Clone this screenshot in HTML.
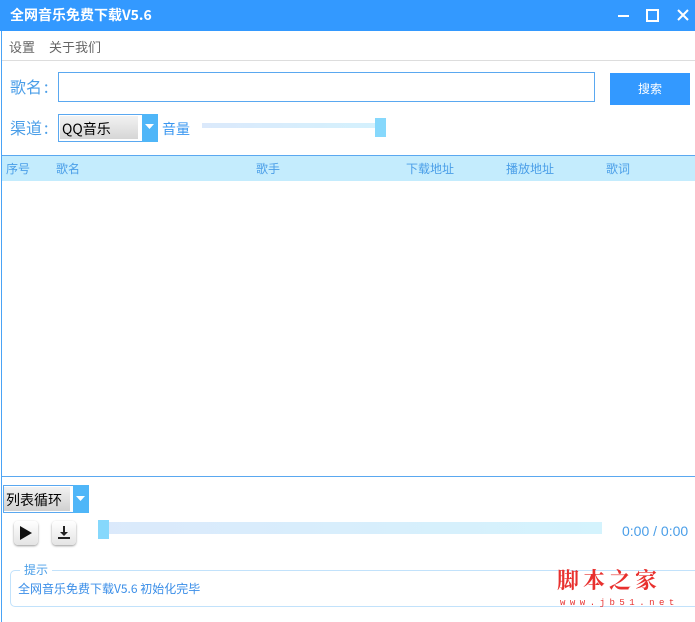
<!DOCTYPE html>
<html><head><meta charset="utf-8"><style>
*{margin:0;padding:0;box-sizing:border-box}
body{width:695px;height:622px;background:#fff;position:relative;overflow:hidden;font-family:"Liberation Sans","Microsoft YaHei","Noto Sans CJK SC",sans-serif;}
.a{position:absolute}
.cjk{font-family:"Noto Sans CJK SC","WenQuanYi Zen Hei",sans-serif}
</style></head><body>
<div class="a" style="left:0;top:0;width:695px;height:31px;background:#3399ff"></div>
<div class="a cjk" style="left:10px;top:6px;color:#fff;font-size:14px;font-weight:bold;line-height:18px">全网音乐免费下载V5.6</div>
<svg class="a" style="left:615px;top:8px" width="80" height="16"><path d="M3 8h11" stroke="#fff" stroke-width="2"/><rect x="32" y="2" width="11" height="11" fill="none" stroke="#fff" stroke-width="2"/><path d="M63 2l10 10M73 2l-10 10" stroke="#fff" stroke-width="2"/></svg>
<div class="a" style="left:1px;top:31px;width:1px;height:591px;background:#4aa3f5"></div>
<div class="a" style="left:2px;top:60px;width:693px;height:1px;background:#ddd"></div>
<div class="a cjk" style="left:9px;top:38px;font-size:13px;color:#666;line-height:18px">设置</div>
<div class="a cjk" style="left:49px;top:38px;font-size:13px;color:#666;line-height:18px">关于我们</div>
<div class="a cjk" style="left:10px;top:76px;font-size:16px;color:#4a9ee8;line-height:20px">歌名</div>
<div class="a cjk" style="left:44px;top:76px;font-size:16px;color:#4a9ee8;line-height:20px">:</div>
<div class="a" style="left:58px;top:72px;width:537px;height:30px;border:1px solid #5aa8f0"></div>
<div class="a cjk" style="left:610px;top:73px;width:80px;height:32px;background:#3399ff;color:#fff;font-size:12px;line-height:32px;text-align:center">搜索</div>
<div class="a cjk" style="left:10px;top:117px;font-size:16px;color:#4a9ee8;line-height:20px">渠道</div>
<div class="a cjk" style="left:44px;top:117px;font-size:16px;color:#4a9ee8;line-height:20px">:</div>
<div class="a" style="left:58px;top:114px;width:100px;height:28px;border:1px solid #5aa8f0;background:#fff"></div>
<div class="a" style="left:60px;top:116px;width:78px;height:23px;background:linear-gradient(#f2f2f2,#d6d6d6)"></div>
<div class="a cjk" style="left:62px;top:119px;font-size:14px;color:#000;line-height:20px">QQ音乐</div>
<div class="a" style="left:142px;top:114px;width:16px;height:28px;background:#4fb6f8"></div>
<svg class="a" style="left:145px;top:124px" width="10" height="6"><path d="M0 0h9L4.5 5z" fill="#fff"/></svg>
<div class="a cjk" style="left:162px;top:120px;font-size:14px;color:#3a97f0;line-height:18px">音量</div>
<div class="a" style="left:202px;top:123px;width:176px;height:5px;background:linear-gradient(90deg,#dbe9fb,#d4f1fd)"></div>
<div class="a" style="left:375px;top:118px;width:11px;height:19px;background:#86d8fc"></div>
<div class="a" style="left:2px;top:155px;width:693px;height:26px;background:#c4ecfd;border-top:1px solid #5aa8f0"></div>
<div class="a cjk" style="top:161px;left:6px;font-size:12px;color:#4a9ee8;line-height:16px;width:690px">
<span class="a" style="left:0">序号</span><span class="a" style="left:50px">歌名</span><span class="a" style="left:250px">歌手</span><span class="a" style="left:400px">下载地址</span><span class="a" style="left:500px">播放地址</span><span class="a" style="left:600px">歌词</span></div>
<div class="a" style="left:2px;top:476px;width:693px;height:1px;background:#5aa8f0"></div>
<div class="a" style="left:3px;top:485px;width:86px;height:28px;background:#fff;border:1px solid #5aa8f0"></div>
<div class="a" style="left:4px;top:487px;width:66px;height:24px;background:linear-gradient(#f2f2f2,#d0d0d0)"></div>
<div class="a cjk" style="left:6px;top:490px;font-size:14px;color:#000;line-height:20px">列表循环</div>
<div class="a" style="left:73px;top:485px;width:16px;height:28px;background:#4fb6f8"></div>
<svg class="a" style="left:76px;top:496px" width="10" height="6"><path d="M0 0h9L4.5 5z" fill="#fff"/></svg>
<div class="a" style="left:14px;top:521px;width:24px;height:24px;border-radius:4px;background:linear-gradient(#fff,#e4e4e4);box-shadow:0 1px 2px #999"></div>
<svg class="a" style="left:19px;top:525px" width="14" height="16"><path d="M1 1L13 8L1 15z" fill="#111"/></svg>
<div class="a" style="left:52px;top:521px;width:24px;height:24px;border-radius:4px;background:linear-gradient(#fff,#e4e4e4);box-shadow:0 1px 2px #999"></div>
<svg class="a" style="left:56px;top:525px" width="16" height="16"><path d="M8 1v7" stroke="#222" stroke-width="2"/><path d="M4 7h8L8 11z" fill="#222"/><path d="M2 13h12" stroke="#222" stroke-width="2"/></svg>
<div class="a" style="left:98px;top:522px;width:504px;height:12px;background:linear-gradient(90deg,#dbe9fb,#d4f3fd)"></div>
<div class="a" style="left:98px;top:520px;width:11px;height:19px;background:#86d8fc"></div>
<div class="a" style="left:622px;top:522px;font-size:14px;color:#4a9ee8;line-height:18px">0:00 / 0:00</div>
<div class="a" style="left:10px;top:570px;width:700px;height:37px;border:1px solid #c2e2fb;border-radius:5px"></div>
<div class="a cjk" style="left:20px;top:562px;background:#fff;padding:0 4px;font-size:12px;color:#4a9ee8;line-height:15px">提示</div>
<div class="a cjk" style="left:18px;top:581px;font-size:12px;color:#3a8ee8;line-height:16px">全网音乐免费下载V5.6 初始化完毕</div>
<div class="a cjk" style="left:557px;top:566px;font-size:22px;color:#e8302e;letter-spacing:4px;line-height:28px;font-weight:bold;font-family:'Noto Serif CJK SC',serif">脚本之家</div>
<div class="a" style="left:560px;top:598px;font-size:9px;color:#e8302e;letter-spacing:4.5px;line-height:10px;font-family:'Liberation Mono',monospace">www.jb51.net</div>
</body></html>
